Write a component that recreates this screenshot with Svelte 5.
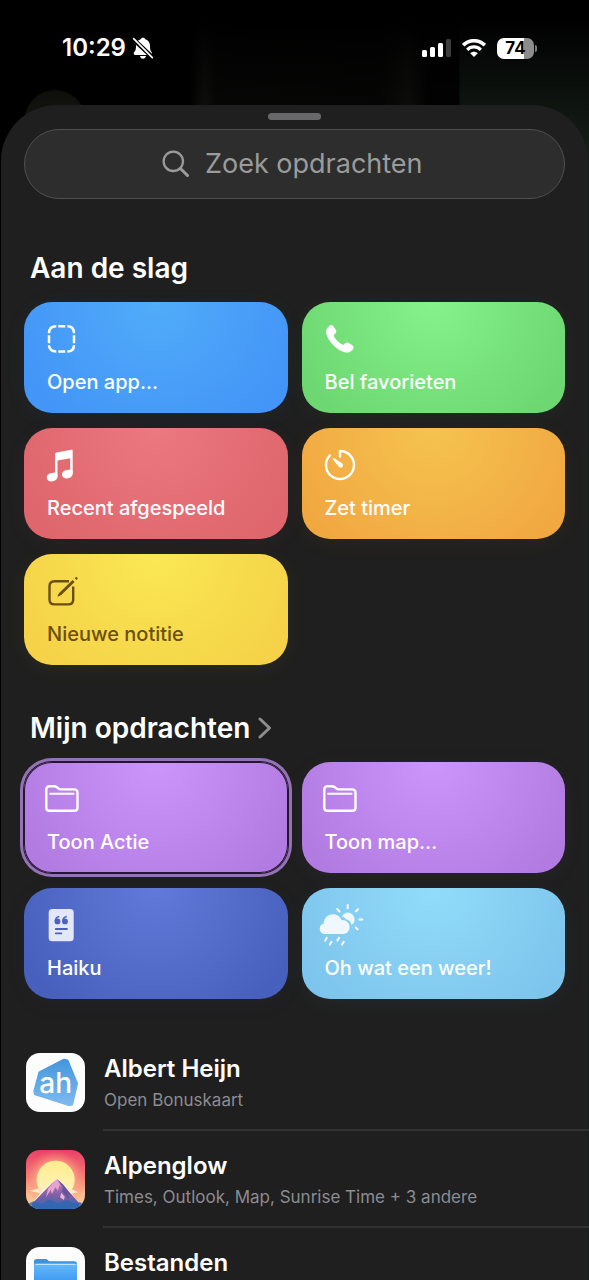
<script>
  const starters = [
    { label: 'Open app...', icon: 'app', tone: 'blue' },
    { label: 'Bel favorieten', icon: 'phone', tone: 'green' },
    { label: 'Recent afgespeeld', icon: 'music', tone: 'red' },
    { label: 'Zet timer', icon: 'timer', tone: 'orange' },
    { label: 'Nieuwe notitie', icon: 'compose', tone: 'yellow' }
  ];

  const shortcuts = [
    { label: 'Toon Actie', icon: 'folder', tone: 'purple', selected: true },
    { label: 'Toon map...', icon: 'folder', tone: 'purple' },
    { label: 'Haiku', icon: 'quote', tone: 'indigo' },
    { label: 'Oh wat een weer!', icon: 'weather', tone: 'sky' }
  ];

  const apps = [
    { name: 'Albert Heijn', detail: 'Open Bonuskaart', logo: 'ah' },
    { name: 'Alpenglow', detail: 'Times, Outlook, Map, Sunrise Time + 3 andere', logo: 'alpenglow' },
    { name: 'Bestanden', logo: 'files' }
  ];

  let query = $state('');
</script>

{#snippet tileIcon(name)}
  <svg class="tile-icon" viewBox="0 0 44 44" fill="none" stroke="currentColor" stroke-width="2.4" aria-hidden="true">
    {#if name === 'app'}
      <path
        stroke-width="2.5"
        d="M10 16.3C10 11.8 12.5 9.3 17.3 9.3M19.3 9.3h7M28.3 9.3c4.4 0 6.7 2.5 6.7 7M35 18.2v8M35 28.2c0 3.8-2.3 6.2-6.7 6.2M26.3 34.4h-7M17.3 34.4c-4.8 0-7.3-2.4-7.3-6.2M10 26.2v-8"
      />
    {:else if name === 'phone'}
      <path
        fill="currentColor"
        stroke="none"
        d="M12.3 9C13.6 7.8 15.2 7.8 16.3 9.2L18.8 12.8C19.6 14 19.4 15.3 18.6 16.2L17.2 17.8C16.7 18.4 16.7 19 17 19.6C18.6 22.6 22 26 25.1 27.6C25.8 27.9 26.3 27.9 26.9 27.4L28.5 26.1C29.4 25.3 30.7 25.2 31.8 25.9L35.4 28.3C36.9 29.4 37 31 35.8 32.4L34.6 33.7C33 35.3 31 35.9 28.6 35.5C24.5 34.8 19.8 31.8 16.4 28.3C12.7 24.5 9.7 20.1 9.1 16C8.8 13.6 9.4 11.8 11 10.2Z"
      />
    {:else if name === 'music'}
      <g fill="currentColor" stroke="none">
        <path d="M16 11.2c0-1 .6-1.6 1.6-1.8l14.6-2.7c1-.2 1.5.3 1.5 1.2V30.500h-2.500V15.200L18.500 17.600V33.700H16Z" />
        <path d="M18.500 32v1.600c0 2.800-2.500 4.900-6 4.900-2.900 0-4.800-1.500-4.800-3.900 0-2.600 2-4.100 5-4.500l3.300-.6z" />
        <path d="M33.700 28.500v2c0 2.800-2.500 4.900-6 4.900-2.900 0-4.800-1.500-4.800-3.900 0-2.600 2-4.100 5-4.500l3.300-.6z" />
      </g>
    {:else if name === 'timer'}
      <path stroke-linecap="round" stroke-linejoin="round" d="M23 13.500V8a14 14 0 1 1-10.100 4.300" />
      <path fill="currentColor" stroke="none" d="M16 15.300c.3-.4.800-.4 1.200-.1l7.500 4.900c1.500 1.100 1.700 2.800.7 3.800s-2.800.900-3.800-.500l-5.700-7c-.3-.4-.3-.8.1-1.100z" />
    {:else if name === 'compose'}
      <path d="M30 12.200H15.500c-3.300 0-5 1.700-5 5v13.200c0 3.300 1.700 5 5 5h13.700c3.300 0 5-1.700 5-5V17.500" />
      <path fill="currentColor" stroke="none" d="M33.600 10.900l2 2-13.300 13.100-3 1.400c-.5.200-.9-.2-.7-.7l1.500-2.800zM35.700 9.200l1-.9c.9-.9 2.500.6 1.700 1.600l-1 1z" />
    {:else if name === 'folder'}
      <path stroke-linejoin="round" d="M7.300 13v-.3C7.300 10.400 8.500 9.200 10.700 9.200h4.200c1.400 0 2 .3 3 1.100l1.300 1.100c.800.7 1.500 1 2.700 1h13.200c2.200 0 3.400 1.200 3.400 3.400v14.600c0 2.200-1.200 3.400-3.400 3.400H10.700c-2.200 0-3.400-1.200-3.400-3.400z" />
      <path stroke-width="2" stroke-linecap="round" d="M11.200 16.800h23.300" />
    {:else if name === 'quote'}
      <rect x="9.700" y="6" width="25" height="32.300" rx="3.500" fill="#e4e7f8" stroke="none" />
      <g fill="#4c62be" stroke="none">
        <circle cx="18.500" cy="18.400" r="2.900" />
        <circle cx="26" cy="18.400" r="2.900" />
      </g>
      <path stroke="#4c62be" stroke-width="1.400" d="M16.300 18.500c-.2-2.600 1.200-4.300 4-5M23.800 18.500c-.2-2.600 1.200-4.300 4-5" />
      <path stroke="#4c62be" stroke-width="1.800" stroke-linecap="round" d="M16.800 26h11.200M16.800 30.400h5.500" />
    {:else if name === 'weather'}
      <path stroke-width="2" stroke-linecap="round" d="M30.700 2v3.200M39 8.200l2-2M42.300 16.500h3M38.700 24.500l1.900 1.700M20.200 6l2.300 2.500M9.800 34.800l-1.600 2.800M14.500 38.800l-1.600 2.800M22 34.800l-1.600 2.800M26.700 38.800l-1.600 2.800" />
      <g fill="#eef8fe" stroke="none">
        <path d="M24.800 13.300a6.800 6.800 0 1 1 9.800 8.800c-.3-3.100-2.700-5.300-5.400-5.700-1.100-1.500-2.600-2.500-4.400-3.100z" />
        <path d="M8.700 31C5 31 2.700 28.600 2.700 25.700c0-2.700 1.700-4.700 4-5.300C6.900 15 11 11.200 16 11.200c3.900 0 7 2.200 8.500 5.700 4.700-.2 8.100 2.900 8.100 7 0 4.100-3 7.100-7.200 7.100z" />
      </g>
    {/if}
  </svg>
{/snippet}

{#snippet tileGrid(items)}
  <div class="grid">
    {#each items as item}
      <button type="button" class="tile {item.tone}" class:selected={item.selected}>
        {@render tileIcon(item.icon)}
        <span class="tile-label">{item.label}</span>
      </button>
    {/each}
  </div>
{/snippet}

{#snippet appLogo(name)}
  <svg class="app-logo" viewBox="0 0 177 177" aria-hidden="true">
    {#if name === 'ah'}
      <defs>
        <linearGradient id="ah-blue" x1="0" y1="0" x2="0" y2="1">
          <stop offset="0" stop-color="#4597dc" />
          <stop offset="1" stop-color="#7db9ee" />
        </linearGradient>
      </defs>
      <rect width="177" height="177" fill="#fdfdfe" />
      <path
        fill="url(#ah-blue)"
        stroke="url(#ah-blue)"
        stroke-width="10"
        stroke-linejoin="round"
        d="M42 59 115 22 123 24 151 92 137 153 129 154 28 122 27 114Z"
      />
      <text x="89" y="121" text-anchor="middle" fill="#fff" font-size="84" font-weight="500">ah</text>
    {:else if name === 'alpenglow'}
      <defs>
        <linearGradient id="glow-sky" x1="0" y1="0" x2="0" y2="1">
          <stop offset="0" stop-color="#ea3f66" />
          <stop offset=".45" stop-color="#f47a74" />
          <stop offset=".75" stop-color="#fbb98c" />
          <stop offset="1" stop-color="#f9d2a8" />
        </linearGradient>
        <radialGradient id="glow-halo" cx="88" cy="90" r="90" gradientUnits="userSpaceOnUse">
          <stop offset=".55" stop-color="#ffb98a" stop-opacity=".8" />
          <stop offset="1" stop-color="#ff8a7a" stop-opacity="0" />
        </radialGradient>
        <linearGradient id="glow-sun" x1="0" y1="0" x2="0" y2="1">
          <stop offset="0" stop-color="#ffec8c" />
          <stop offset="1" stop-color="#fff6c4" />
        </linearGradient>
        <linearGradient id="glow-peak" x1="0" y1="0" x2="0" y2="1">
          <stop offset="0" stop-color="#c878b8" />
          <stop offset=".55" stop-color="#7d5fa6" />
          <stop offset="1" stop-color="#2f67b4" />
        </linearGradient>
      </defs>
      <rect width="177" height="177" fill="url(#glow-sky)" />
      <circle cx="88" cy="90" r="90" fill="url(#glow-halo)" />
      <circle cx="89" cy="89" r="57" fill="url(#glow-sun)" />
      <path fill="#ffe9c4" d="M10 122 56 112 90 122 122 112 158 127 120 134 50 132Z" />
      <path fill="#fff2dc" d="M12 168 50 120 94 84 128 118 164 168Z" />
      <path fill="url(#glow-peak)" d="M18 177v-16L58 120 78 100 94 88 112 104 128 124 160 160v17Z" />
      <path fill="#e7a3cf" d="M94 88 106 112 100 106 96 122 88 112 78 132 74 120 60 142 66 116 80 100Z" />
      <path fill="#4d4a8c" d="M94 88 112 104 140 142 124 128 130 148 108 124 110 112Z" opacity=".65" />
      <path fill="#f0b4d2" d="M106 128 116 140 114 150 102 142Z" />
      <path fill="#2f66b2" d="M0 177v-12L22 154 48 162 70 148 96 160 124 150 150 162 162 156 177 168v9Z" opacity=".8" />
    {:else if name === 'files'}
      <defs>
        <linearGradient id="folder-blue" x1="0" y1="0" x2="0" y2="1">
          <stop offset="0" stop-color="#66b8fb" />
          <stop offset="1" stop-color="#2286ea" />
        </linearGradient>
      </defs>
      <rect width="177" height="177" fill="#fdfdfe" />
      <path fill="#3b94dc" d="M24 44c0-5 3-8 8-8h28c5 0 6 7 12 7h72c6 0 9 3 9 8v80H24Z" />
      <path fill="url(#folder-blue)" d="M24 50h129v82c0 6-3 9-9 9H33c-6 0-9-3-9-9Z" />
      <path stroke="#bfe3ff" stroke-width="4" stroke-linecap="round" d="M30 52h117" />
    {/if}
  </svg>
{/snippet}

<div class="screen">
  <header class="status">
    <div class="status-group">
      <time>10:29</time>
      <svg class="bell" viewBox="0 0 60 66" role="img" aria-label="Stil">
        <path fill="#fff" d="M30 2c4 0 6 2 7 5 9 3 14 10 14 20 0 9 1 14 5 19 3 4 1 8-4 8H7c-5 0-6-4-4-8 5-5 6-10 6-19C9 17 14 10 23 7c1-3 3-5 7-5ZM21 57h18c-1 5-4 8-9 8s-8-3-9-8Z" />
        <path stroke="#000" stroke-width="13" d="M-2 4 62 64" />
        <path stroke="#fff" stroke-width="5" stroke-linecap="round" d="M2 5 58 62" />
      </svg>
    </div>
    <div class="status-group indicators">
      <svg class="signal" viewBox="0 0 29 18" role="img" aria-label="Bereik">
        <rect x="0" y="11" width="5" height="7" rx="1.500" fill="#fff" />
        <rect x="8" y="8" width="5" height="10" rx="1.500" fill="#fff" />
        <rect x="16" y="4" width="5" height="14" rx="1.500" fill="#fff" />
        <rect x="24" y="0" width="5" height="18" rx="1.500" fill="#3c3c3c" />
      </svg>
      <svg class="wifi" viewBox="0 0 24 18" fill="none" stroke="#fff" role="img" aria-label="Wifi">
        <path stroke-width="3.600" d="M1.200 6.200c6.300-6 15.300-6 21.600 0" />
        <path stroke-width="3.200" d="M5.200 10.800c4-3.800 9.600-3.800 13.600 0" />
        <path fill="#fff" stroke="none" d="M12 18 8.200 14.300c2.300-2 5.300-2 7.600 0Z" />
      </svg>
      <div class="battery"><span>74</span></div>
    </div>
  </header>

  <main class="sheet">
    <div class="grabber"></div>

    <label class="search">
      <svg viewBox="0 0 28 28" fill="none" stroke="#9b9b9b" stroke-linecap="round" aria-hidden="true">
        <circle cx="11.300" cy="11.300" r="9.700" stroke-width="2.300" />
        <path stroke-width="3" d="M18.700 18.700 25.500 25.500" />
      </svg>
      <input type="text" placeholder="Zoek opdrachten" aria-label="Zoek opdrachten" bind:value={query} />
    </label>

    <section>
      <h2>Aan de slag</h2>
      {@render tileGrid(starters)}
    </section>

    <section>
      <h2>
        <a href="#mijn-opdrachten">
          Mijn opdrachten
          <svg class="chevron" viewBox="0 0 14 22" fill="none" aria-hidden="true">
            <path stroke="#8e8e90" stroke-width="3" stroke-linecap="round" stroke-linejoin="round" d="M2 2 11.500 11 2 20" />
          </svg>
        </a>
      </h2>
      {@render tileGrid(shortcuts)}
    </section>

    <ul class="apps">
      {#each apps as app (app.name)}
        <li>
          {@render appLogo(app.logo)}
          <div class="app-text">
            <h3>{app.name}</h3>
            {#if app.detail}<p>{app.detail}</p>{/if}
          </div>
        </li>
      {/each}
    </ul>
  </main>
</div>

<style>
  :global(body) {
    margin: 0;
    background: #000;
  }

  .screen {
    display: flex;
    flex-direction: column;
    height: 100vh;
    overflow: hidden;
    /* dimmed remains of the screen behind the sheet */
    background:
      linear-gradient(#000 20px, transparent 150px) 0 0 / 100% 150px no-repeat,
      radial-gradient(circle at 55px 120px, #1a1a15 29px, transparent 31px),
      linear-gradient(90deg, #000 190px, #151613 204px, #090a08 216px, #070806 380px, #131511 408px, #020302 428px, #020302 459px, #151e18 460px);
    color: #fff;
    font-family: Inter, "Liberation Sans", sans-serif;
  }

  .status {
    display: flex;
    flex: none;
    align-items: center;
    justify-content: space-between;
    padding: 36px 52px 45px 62px;
  }

  .status-group {
    display: flex;
    align-items: center;
    gap: 7px;
  }

  .status time {
    font-size: 24px;
    font-weight: 600;
    line-height: 24px;
  }

  .bell {
    width: 20px;
    height: 22px;
  }

  .indicators {
    gap: 11px;
  }

  .signal {
    width: 29px;
    height: 18px;
  }

  .wifi {
    width: 24px;
    height: 18px;
  }

  .battery {
    display: flex;
    align-items: center;
  }

  .battery span {
    width: 37px;
    border-radius: 7px;
    background: linear-gradient(90deg, #fff 74%, #8c8c8c 74%);
    color: #000;
    font-size: 17px;
    font-weight: 700;
    line-height: 21px;
    text-align: center;
  }

  .battery::after {
    content: '';
    width: 2px;
    height: 7px;
    margin-left: 1px;
    border-radius: 0 2px 2px 0;
    background: #7c7c7c;
  }

  .sheet {
    flex: none;
    margin: 0 1px;
    padding: 8px 23px 0;
    border-radius: 56px 56px 0 0;
    background: #1f1f1f;
  }

  .grabber {
    width: 53px;
    height: 7px;
    margin: 0 auto 9px;
    border-radius: 4px;
    background: #68686a;
  }

  .search {
    display: flex;
    align-items: center;
    justify-content: center;
    gap: 15px;
    box-sizing: border-box;
    height: 70px;
    margin-bottom: 52px;
    border: 1px solid #505050;
    border-radius: 35px;
    background: #2d2d2d;
  }

  .search svg {
    width: 28px;
    height: 28px;
  }

  .search input {
    width: 222px;
    padding: 0;
    border: 0;
    outline: none;
    background: none;
    color: #fff;
    font: 400 27px/34px Inter, "Liberation Sans", sans-serif;
  }

  .search input::placeholder {
    color: #9b9b9b;
    opacity: 1;
  }

  section {
    margin-bottom: 46px;
  }

  h2 {
    margin: 0 6px 17px;
    font-size: 28px;
    font-weight: 600;
    line-height: 34px;
  }

  h2 a {
    display: inline-flex;
    align-items: center;
    gap: 8px;
    color: inherit;
    text-decoration: none;
  }

  .chevron {
    width: 14px;
    height: 22px;
  }

  .grid {
    display: grid;
    grid-template-columns: repeat(2, minmax(0, 1fr));
    gap: 15px 14px;
  }

  .tile {
    display: flex;
    flex-direction: column;
    align-items: flex-start;
    gap: 9px;
    padding: 15px 15px 19px;
    border: 0;
    border-radius: 28px;
    background: radial-gradient(circle at 50% 0, var(--light), var(--dark) 150px);
    box-shadow: 0 4px 24px color-mix(in srgb, var(--dark) 5%, transparent);
    color: #fff;
    font: inherit;
    text-align: left;
  }

  .blue {
    --light: #51acf9;
    --dark: #4395f7;
  }

  .green {
    --light: #85f28b;
    --dark: #6dd771;
  }

  .red {
    --light: #ec7880;
    --dark: #de666c;
  }

  .orange {
    --light: #f5c34f;
    --dark: #f1a841;
  }

  .yellow {
    --light: #fae853;
    --dark: #f5d248;
    color: #6b4e10;
  }

  .purple {
    --light: #cb95fc;
    --dark: #b27be2;
  }

  .indigo {
    --light: #6179d8;
    --dark: #4860bd;
  }

  .sky {
    --light: #92dcfa;
    --dark: #7dc5ec;
  }

  .selected {
    box-shadow: inset 0 0 0 1px #24172f, 0 0 0 1px #24172f, 0 0 0 4px #9373b5;
  }

  .tile-icon {
    width: 44px;
    height: 44px;
    overflow: visible;
  }

  .tile-label {
    padding-left: 8px;
    font-size: 20px;
    font-weight: 500;
    line-height: 24px;
  }

  .apps {
    margin: -11px -24px 0;
    padding: 0 0 0 26px;
    list-style: none;
  }

  .apps li {
    display: flex;
    align-items: flex-start;
    gap: 18px;
  }

  .app-logo {
    flex: none;
    width: 59px;
    height: 59px;
    margin-top: 19px;
    border-radius: 14px;
  }

  .app-text {
    flex: 1;
    padding: 20px 0 17px 1px;
    border-bottom: 2px solid #323234;
  }

  h3 {
    margin: 0 0 5px;
    font-size: 24px;
    font-weight: 600;
    line-height: 30px;
  }

  p {
    margin: 0;
    color: #8c8c91;
    font-size: 17px;
    line-height: 23px;
  }
</style>
